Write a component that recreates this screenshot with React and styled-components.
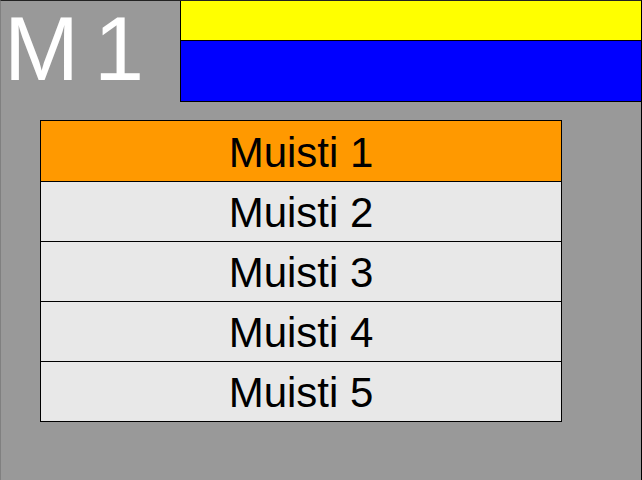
import React from 'react';
import styled, { createGlobalStyle } from 'styled-components';

const GlobalStyle = createGlobalStyle`
	html, body {
		margin: 0;
		padding: 0;
		background: #999999;
	}
	* {
		box-sizing: border-box;
	}
`;

const Screen = styled.div`
	width: 642px;
	height: 480px;
	background: #999999;
	border-top: 1px solid #222222;
	border-left: 1px solid #808080;
	border-right: 1px solid #000000;
	font-family: 'Liberation Sans', Arial, sans-serif;
	overflow: hidden;
`;

const Header = styled.header`
	display: grid;
	grid-template-columns: 179px 1fr;
`;

const Title = styled.div`
	color: #ffffff;
	font-size: 90px;
	line-height: 90px;
	letter-spacing: -5px;
	padding: 3px 0 0 3px;
	white-space: pre;
`;

const Bars = styled.div`
	display: flex;
	flex-direction: column;
	border-left: 1px solid #000000;
`;

const Bar = styled.div`
	height: ${({ $height }) => $height}px;
	background: ${({ $color }) => $color};
	border-bottom: 1px solid #000000;
`;

const MemoryList = styled.ul`
	list-style: none;
	margin: 18px 0 0 39px;
	padding: 0;
	width: 522px;
	border: 1px solid #000000;
	border-bottom: none;
`;

const MemoryRow = styled.li`
	height: 60px;
	display: flex;
	align-items: center;
	justify-content: center;
	background: ${({ $active }) => ($active ? '#ff9900' : '#e8e8e8')};
	border-bottom: 1px solid #000000;
	color: #000000;
	font-size: 42px;
	line-height: 1;
	padding-top: 3px;

	&:first-child {
		height: 61px;
		padding-top: 4px;
	}
`;

const memories = ['Muisti 1', 'Muisti 2', 'Muisti 3', 'Muisti 4', 'Muisti 5'];

export default function App() {
	const selected = 0;

	return (
		<>
			<GlobalStyle />
			<Screen>
				<Header>
					<Title>M 1</Title>
					<Bars>
						<Bar $height={40} $color="#ffff00" />
						<Bar $height={61} $color="#0000ff" />
					</Bars>
				</Header>
				<MemoryList>
					{memories.map((name, i) => (
						<MemoryRow key={name} $active={i === selected}>
							{name}
						</MemoryRow>
					))}
				</MemoryList>
			</Screen>
		</>
	);
}
